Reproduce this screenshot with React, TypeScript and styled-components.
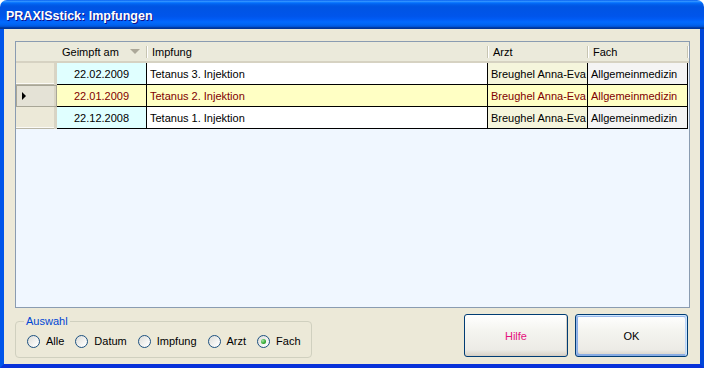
import React from 'react';
import styled, { createGlobalStyle } from 'styled-components';

const GlobalStyle = createGlobalStyle`
  html, body {
    margin: 0;
    padding: 0;
    background: #ffffff;
    overflow: hidden;
  }
  body {
    font-family: "Liberation Sans", Arial, sans-serif;
    font-size: 11px;
  }
`;

const Window = styled.div`
  width: 704px;
  height: 368px;
  display: flex;
  flex-direction: column;
  box-sizing: border-box;
  overflow: hidden;
`;

const TitleBar = styled.div`
  height: 29px;
  flex: none;
  display: flex;
  align-items: center;
  padding: 2px 0 0 6px;
  box-sizing: border-box;
  border-radius: 7px 7px 0 0;
  background: linear-gradient(
    to bottom,
    #0058ee 0%,
    #3593ff 4%,
    #288eff 6%,
    #127dff 8%,
    #036ffc 10%,
    #0262ee 14%,
    #0057e5 20%,
    #0054e3 24%,
    #0055eb 56%,
    #005bf5 66%,
    #026afe 76%,
    #0062ef 86%,
    #0052d6 92%,
    #0040ab 94%,
    #003092 100%
  );
  color: #ffffff;
  font-weight: bold;
  font-size: 12.5px;
  text-shadow: 1px 1px #0f1089;
`;

const Frame = styled.div`
  flex: 1;
  min-height: 0;
  display: flex;
  box-sizing: border-box;
  border-left: 4px solid #0055ea;
  border-right: 4px solid #0046d8;
  border-bottom: 4px solid #0831d9;
  box-shadow: inset 1px 0 #166aee;
`;

const Body = styled.div`
  flex: 1;
  min-width: 0;
  background: #ece9d8;
  padding: 12px 10px 6px 11px;
  display: flex;
  flex-direction: column;
  gap: 6px;
`;

const COLS = '41px 90px 341px 100px 100px 1fr';

const Grid = styled.div`
  height: 268px;
  box-sizing: border-box;
  border: 1px solid #8a9cb1;
  background: #f0f7ff;
  display: flex;
  flex-direction: column;
  overflow: hidden;
`;

const HeaderRow = styled.div`
  display: grid;
  grid-template-columns: ${COLS};
  height: 21px;
  background: #ebeadb;
  box-shadow: inset 0 -2px #d6d2c2, inset 0 -1px #c5c2b2;
`;

const HeaderCell = styled.div<{ $sep?: boolean }>`
  position: relative;
  display: flex;
  align-items: center;
  padding: 0 0 2px 5px;
  color: #000;
  white-space: nowrap;
  min-width: 0;

  ${p =>
    p.$sep &&
    `
    &::after {
      content: '';
      position: absolute;
      right: 0;
      top: 4px;
      bottom: 5px;
      width: 1px;
      background: #c7c5b2;
      box-shadow: 1px 0 #ffffff;
    }
  `}
`;

const SortArrow = styled.span`
  position: absolute;
  left: 73px;
  top: 7px;
  width: 0;
  height: 0;
  border-left: 5px solid transparent;
  border-right: 5px solid transparent;
  border-top: 5px solid #aca899;
`;

const Row = styled.div`
  display: grid;
  grid-template-columns: ${COLS};
  height: 22px;
`;

const Indicator = styled.div<{ $selected?: boolean }>`
  position: relative;
  background: ${p => (p.$selected ? '#e4e2d6' : '#ece9d8')};
  box-shadow: ${p =>
    p.$selected
      ? 'inset 0 0 0 1px #a8a697, inset -3px 0 #d8d4c4'
      : 'inset -3px 0 #d8d4c4, inset 0 -1px #b9b6a6, inset 0 -2px #fbfaf6'};

  ${p =>
    p.$selected &&
    `
    &::before {
      content: '';
      position: absolute;
      left: 6px;
      top: 7px;
      width: 0;
      height: 0;
      border-top: 4px solid transparent;
      border-bottom: 4px solid transparent;
      border-left: 4px solid #000;
    }
  `}
`;

const Cell = styled.div<{ $bg: string; $selected?: boolean; $center?: boolean }>`
  background: ${p => (p.$selected ? '#ffffc4' : p.$bg)};
  color: ${p => (p.$selected ? '#800000' : '#000000')};
  border-right: 1px solid #000;
  border-bottom: 1px solid #000;
  display: flex;
  align-items: center;
  justify-content: ${p => (p.$center ? 'center' : 'flex-start')};
  padding-left: ${p => (p.$center ? '0' : '3px')};
  white-space: nowrap;
  overflow: hidden;
  min-width: 0;
`;

const BottomBar = styled.div`
  display: flex;
  justify-content: space-between;
  align-items: flex-end;
  padding-right: 2px;
`;

const GroupBox = styled.fieldset`
  margin: 0;
  width: 297px;
  min-width: 0;
  height: 43px;
  box-sizing: border-box;
  border: 1px solid #d0d0bf;
  border-radius: 4px;
  padding: 0 0 0 11px;
  display: flex;
  align-items: center;
  gap: 11px;
`;

const Legend = styled.legend`
  color: #0046d5;
  padding: 0 2px;
  margin-left: -3px;
`;

const RadioItem = styled.label`
  display: flex;
  align-items: center;
  gap: 6px;
  color: #000;
  margin-top: -2px;
`;

const RadioCircle = styled.span<{ $checked?: boolean }>`
  width: 13px;
  height: 13px;
  box-sizing: border-box;
  border-radius: 50%;
  border: 1px solid #1c5180;
  background: linear-gradient(135deg, #dcdcd7 0%, #ffffff 90%);
  display: flex;
  align-items: center;
  justify-content: center;

  &::after {
    content: '';
    width: 5px;
    height: 5px;
    border-radius: 50%;
    background: radial-gradient(circle at 35% 35%, #a4e5a4 0%, #2fa82f 60%, #1e8a1e 100%);
    display: ${p => (p.$checked ? 'block' : 'none')};
  }
`;

const Buttons = styled.div`
  display: flex;
  gap: 7px;
  margin-bottom: 1px;
`;

const Button = styled.button<{ $width: number; $focused?: boolean; $color?: string }>`
  width: ${p => p.$width}px;
  height: 43px;
  box-sizing: border-box;
  border: 1px solid #003c74;
  border-radius: 3px;
  background: linear-gradient(180deg, #ffffff 0%, #f4f4ef 40%, #ecebe6 85%, #d6d0c5 100%);
  font-family: "Liberation Sans", Arial, sans-serif;
  font-size: 11px;
  color: ${p => p.$color || '#000'};
  padding: 0;
  box-shadow: ${p =>
    p.$focused
      ? 'inset -1px 1px #cee7ff, inset 1px 2px #98b8ea, inset -2px 2px #bcd4f6, inset 1px -1px #89ade4, inset 2px -2px #89ade4'
      : 'inset -1px -1px #d6d0c5'};
`;

const columns = [
  { key: 'date', bg: '#e0ffff', center: true },
  { key: 'vaccine', bg: '#ffffff' },
  { key: 'doctor', bg: '#f5f5dc' },
  { key: 'field', bg: '#f4f4f4' },
] as const;

const rows = [
  { date: '22.02.2009', vaccine: 'Tetanus 3. Injektion', doctor: 'Breughel Anna-Eva', field: 'Allgemeinmedizin' },
  { date: '22.01.2009', vaccine: 'Tetanus 2. Injektion', doctor: 'Breughel Anna-Eva', field: 'Allgemeinmedizin', selected: true },
  { date: '22.12.2008', vaccine: 'Tetanus 1. Injektion', doctor: 'Breughel Anna-Eva', field: 'Allgemeinmedizin' },
];

const filters = ['Alle', 'Datum', 'Impfung', 'Arzt', 'Fach'];

const App: React.FC = () => {
  return (
    <>
      <GlobalStyle />
      <Window>
        <TitleBar>PRAXISstick: Impfungen</TitleBar>
        <Frame>
          <Body>
            <Grid>
              <HeaderRow>
                <HeaderCell />
                <HeaderCell $sep>
                  Geimpft am
                  <SortArrow />
                </HeaderCell>
                <HeaderCell $sep>Impfung</HeaderCell>
                <HeaderCell $sep>Arzt</HeaderCell>
                <HeaderCell $sep>Fach</HeaderCell>
                <HeaderCell />
              </HeaderRow>
              {rows.map((row, i) => (
                <Row key={i}>
                  <Indicator $selected={row.selected} />
                  {columns.map(col => (
                    <Cell
                      key={col.key}
                      $bg={col.bg}
                      $selected={row.selected}
                      $center={'center' in col && col.center}
                    >
                      {row[col.key]}
                    </Cell>
                  ))}
                  <div />
                </Row>
              ))}
            </Grid>
            <BottomBar>
              <GroupBox>
                <Legend>Auswahl</Legend>
                {filters.map(f => (
                  <RadioItem key={f}>
                    <RadioCircle $checked={f === 'Fach'} />
                    {f}
                  </RadioItem>
                ))}
              </GroupBox>
              <Buttons>
                <Button $width={104} $color="#e5127d">Hilfe</Button>
                <Button $width={113} $focused>OK</Button>
              </Buttons>
            </BottomBar>
          </Body>
        </Frame>
      </Window>
    </>
  );
};

export default App;
